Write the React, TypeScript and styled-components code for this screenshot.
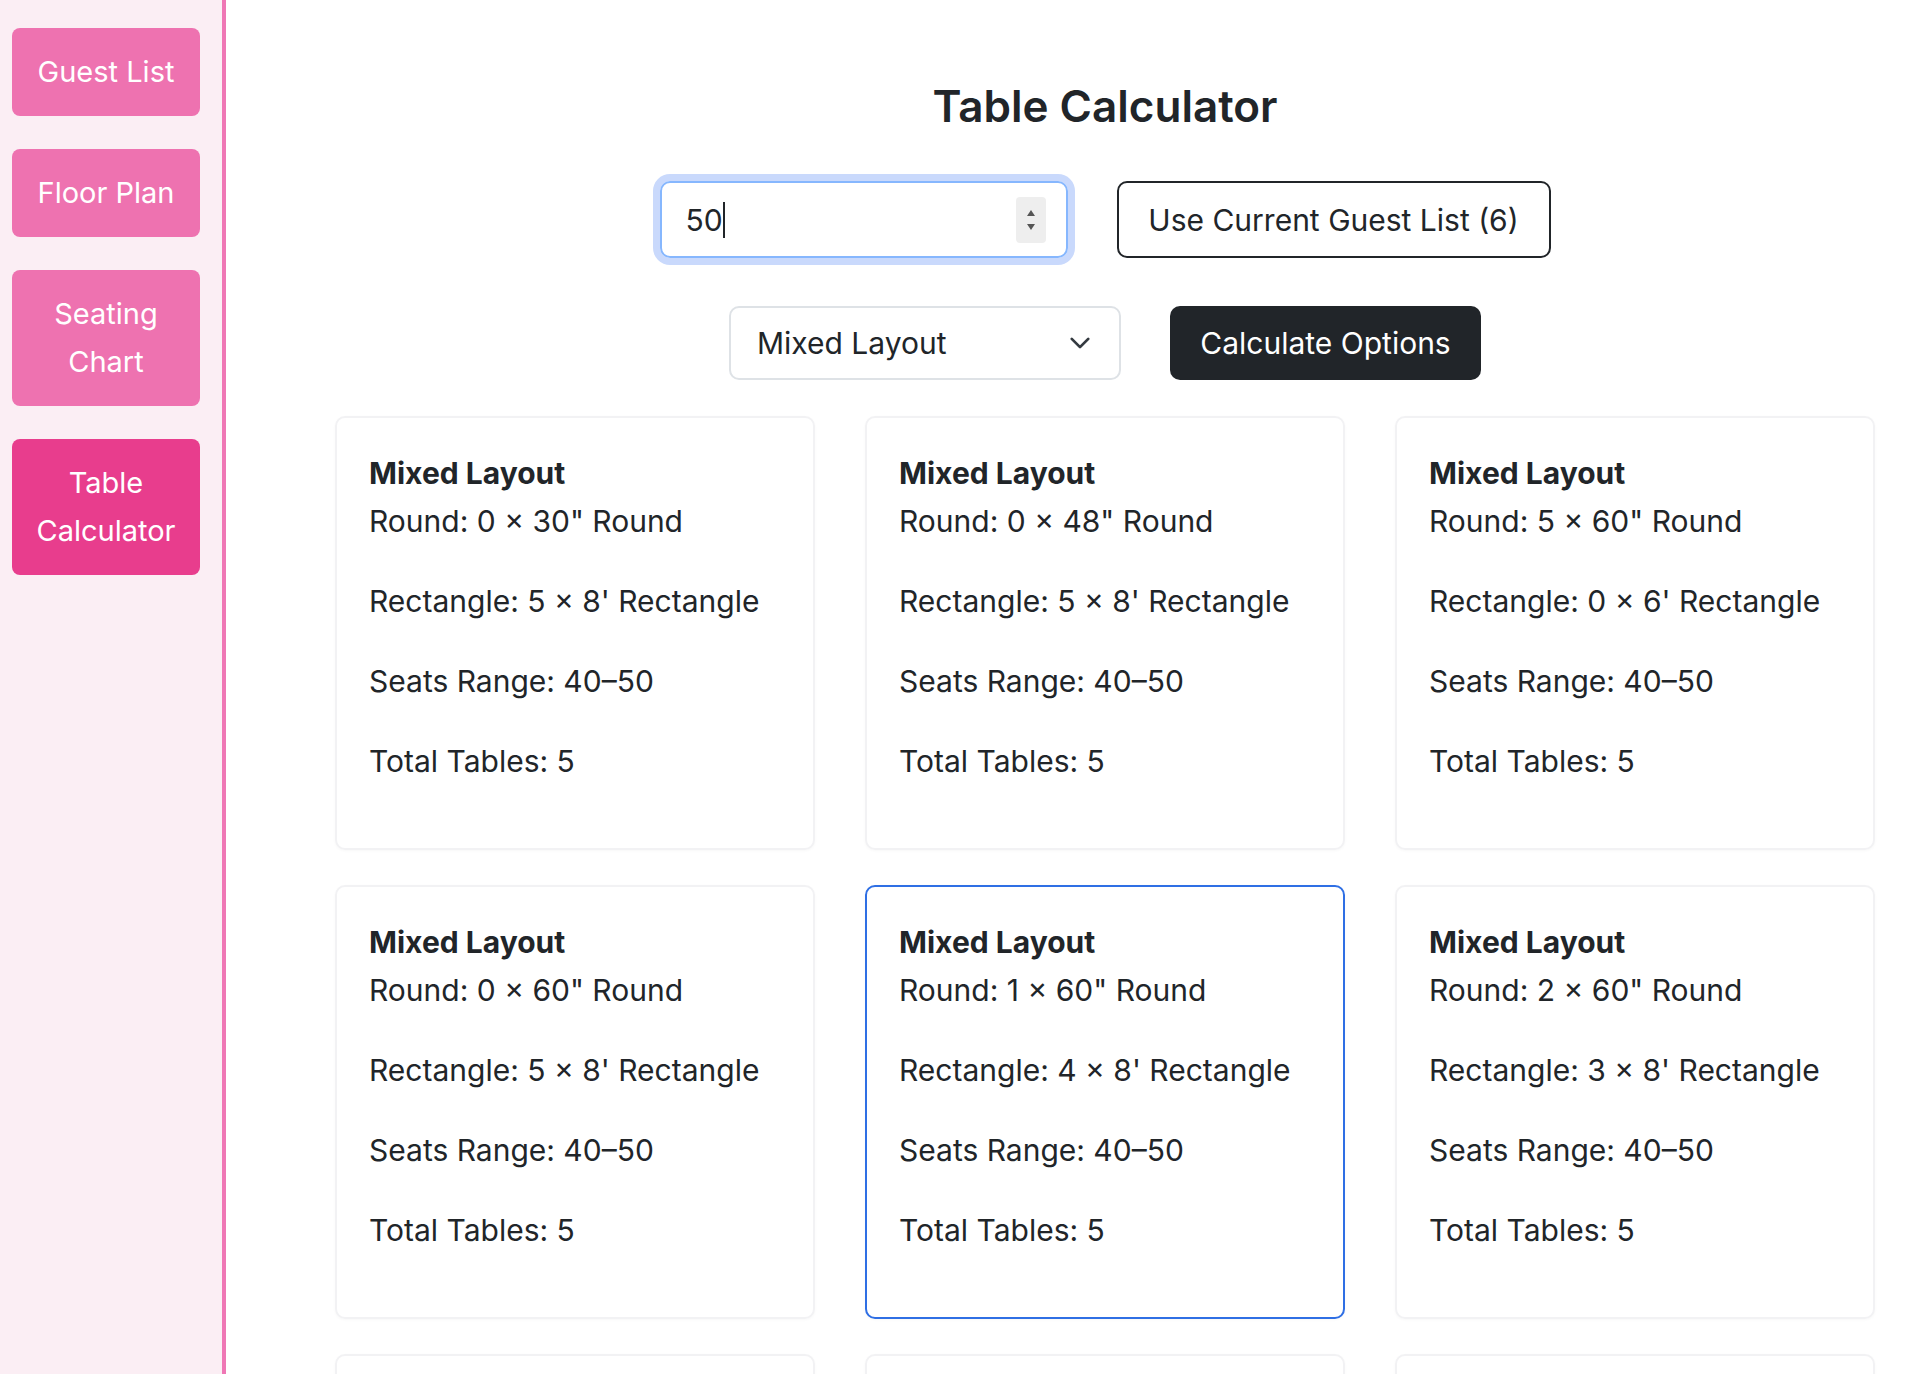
import React from 'react';
import styled, { createGlobalStyle } from 'styled-components';

const Global = createGlobalStyle`
  body {
    margin: 0;
    font-family: Inter, "Liberation Sans", sans-serif;
    color: #212529;
    background: #fff;
  }
`;

interface Option {
  round: string;
  rect: string;
  selected?: boolean;
}

const options: Option[] = [
  { round: '0 × 30" Round', rect: "5 × 8' Rectangle" },
  { round: '0 × 48" Round', rect: "5 × 8' Rectangle" },
  { round: '5 × 60" Round', rect: "0 × 6' Rectangle" },
  { round: '0 × 60" Round', rect: "5 × 8' Rectangle" },
  { round: '1 × 60" Round', rect: "4 × 8' Rectangle", selected: true },
  { round: '2 × 60" Round', rect: "3 × 8' Rectangle" },
  { round: '', rect: '' },
  { round: '', rect: '' },
  { round: '', rect: '' }
];

const navItems = [
  { label: 'Guest List' },
  { label: 'Floor Plan' },
  { label: 'Seating Chart', narrow: true },
  { label: 'Table Calculator', narrow: true, active: true }
];

const App = () => (
  <>
    <Global />
    <Page>
      <Sidebar>
        {navItems.map(n => (
          <NavButton key={n.label} $active={n.active} $narrow={n.narrow}>
            {n.label}
          </NavButton>
        ))}
      </Sidebar>
      <Main>
        <Title>Table Calculator</Title>
        <Controls>
          <NumberBox>
            <span>50</span>
            <Caret />
            <Spinner>
              <svg width="12" height="30" viewBox="0 0 12 30">
                <path d="M2 11 L6 5 L10 11 Z" fill="#555" />
                <path d="M2 19 L6 25 L10 19 Z" fill="#555" />
              </svg>
            </Spinner>
          </NumberBox>
          <OutlineButton>Use Current Guest List (6)</OutlineButton>
        </Controls>
        <Controls>
          <Select>
            <span>Mixed Layout</span>
            <svg width="22" height="22" viewBox="0 0 16 16">
              <path d="M2 5l6 6 6-6" fill="none" stroke="#343a40" strokeWidth="2" strokeLinecap="round" strokeLinejoin="round" />
            </svg>
          </Select>
          <DarkButton>Calculate Options</DarkButton>
        </Controls>
        <Grid>
          {options.map((o, i) => (
            <Card key={i} $selected={o.selected}>
              {o.round && (
                <>
                  <CardTitle>Mixed Layout</CardTitle>
                  <Line>Round: {o.round}</Line>
                  <Line>Rectangle: {o.rect}</Line>
                  <Line>Seats Range: 40–50</Line>
                  <Line>Total Tables: 5</Line>
                </>
              )}
            </Card>
          ))}
        </Grid>
      </Main>
    </Page>
  </>
);

const Page = styled.div`
  display: flex;
  height: 1374px;
  overflow: hidden;
`;

const Sidebar = styled.nav`
  width: 222px;
  flex: 0 0 auto;
  background: #fbeef4;
  border-right: 4px solid #ef77b5;
  padding: 28px 0 0 12px;
  box-sizing: content-box;
  display: flex;
  flex-direction: column;
  gap: 33px;
  width: 188px;
  padding-right: 22px;
`;

const NavButton = styled.div<{ $active?: boolean; $narrow?: boolean }>`
  background: ${p => (p.$active ? '#e83d8d' : '#ee72b0')};
  color: #fff;
  border-radius: 8px;
  font-size: 29px;
  line-height: 48px;
  text-align: center;
  padding: ${p => (p.$narrow ? '20px 12px' : '20px 8px')};
`;

const Main = styled.main`
  flex: 1;
  padding: 0 36px 0 109px;
  display: flex;
  flex-direction: column;
  align-items: center;
`;

const Title = styled.h1`
  margin: 78px 0 0;
  font-size: 44px;
  line-height: 56px;
  font-weight: 600;
`;

const Controls = styled.div`
  display: flex;
  gap: 49px;
  margin-top: 47px;
  & + & {
    margin-top: 48px;
  }
`;

const NumberBox = styled.div`
  width: 408px;
  height: 77px;
  box-sizing: border-box;
  border: 2px solid #86b7fe;
  border-radius: 10px;
  box-shadow: 0 0 0 7px #c9d9fc;
  display: flex;
  align-items: center;
  padding: 0 20px 0 24px;
  font-size: 30px;
`;

const Caret = styled.span`
  width: 2px;
  height: 36px;
  background: #212529;
`;

const Spinner = styled.span`
  margin-left: auto;
  width: 30px;
  height: 46px;
  background: #eee;
  border-radius: 4px;
  display: flex;
  align-items: center;
  justify-content: center;
`;

const OutlineButton = styled.button`
  width: 434px;
  height: 77px;
  background: #fff;
  border: 2px solid #212529;
  border-radius: 10px;
  font: inherit;
  font-size: 30px;
  color: #212529;
`;

const Select = styled.div`
  width: 392px;
  height: 74px;
  box-sizing: border-box;
  border: 2px solid #dee2e6;
  border-radius: 10px;
  display: flex;
  align-items: center;
  justify-content: space-between;
  padding: 0 28px 0 26px;
  font-size: 30px;
`;

const DarkButton = styled.button`
  width: 311px;
  height: 74px;
  background: #212529;
  color: #fff;
  border: 0;
  border-radius: 10px;
  font: inherit;
  font-size: 30px;
`;

const Grid = styled.div`
  align-self: stretch;
  margin-top: 36px;
  display: grid;
  grid-template-columns: repeat(3, 480px);
  column-gap: 50px;
  row-gap: 35px;
`;

const Card = styled.div<{ $selected?: boolean }>`
  height: 434px;
  box-sizing: border-box;
  padding: 31px 32px;
  border-radius: 10px;
  border: 2px solid ${p => (p.$selected ? '#2f6fe4' : '#f2f2f4')};
  box-shadow: 0 1px 3px rgba(0, 0, 0, 0.03);
`;

const CardTitle = styled.div`
  font-weight: 700;
  font-size: 30px;
  line-height: 48px;
`;

const Line = styled.p`
  margin: 0 0 32px;
  font-size: 30px;
  line-height: 48px;
`;

export default App;
